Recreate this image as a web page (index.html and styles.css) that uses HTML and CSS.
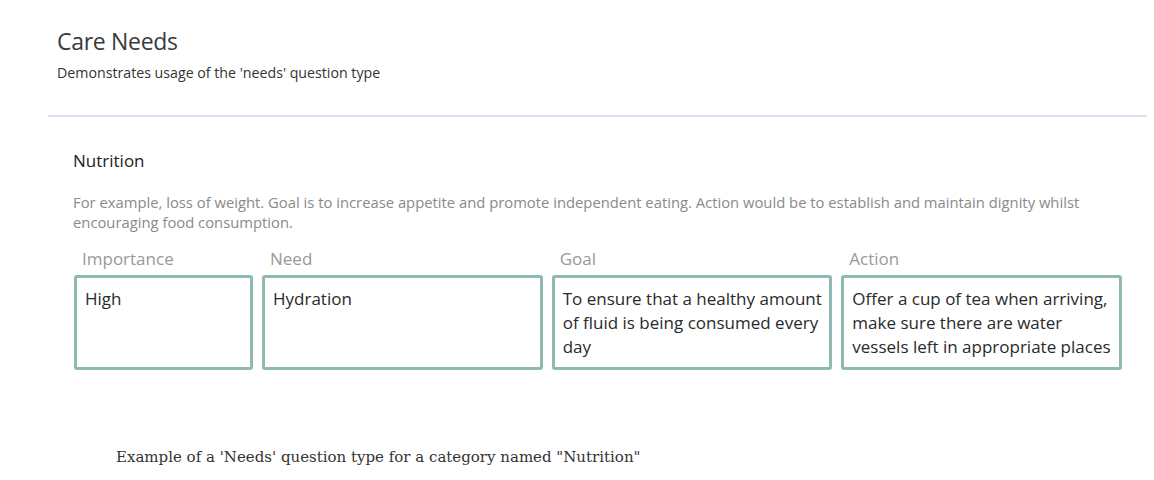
FILE: index.html
```html
<!DOCTYPE html>
<html lang="en">
<head>
  <meta charset="UTF-8">
  <meta name="viewport" content="width=device-width, initial-scale=1.0">
  <title>Care Needs</title>
  <link rel="stylesheet" href="styles.css">
</head>
<body>
  <div class="form">
    <div class="form-header">
      <h1 class="title">Care Needs</h1>
      <p class="subtitle">Demonstrates usage of the 'needs' question type</p>
    </div>

    <div class="question">
      <h2 class="question-title">Nutrition</h2>
      <p class="question-help">For example, loss of weight. Goal is to increase appetite and promote independent eating. Action would be to establish and maintain dignity whilst encouraging food consumption.</p>

      <div class="needs">
        <div class="need-col">
          <label class="need-label">Importance</label>
          <div class="need-box">High</div>
        </div>
        <div class="need-col">
          <label class="need-label">Need</label>
          <div class="need-box">Hydration</div>
        </div>
        <div class="need-col">
          <label class="need-label">Goal</label>
          <div class="need-box">To ensure that a healthy amount of fluid is being consumed every day</div>
        </div>
        <div class="need-col">
          <label class="need-label">Action</label>
          <div class="need-box">Offer a cup of tea when arriving, make sure there are water vessels left in appropriate places</div>
        </div>
      </div>
    </div>
  </div>

  <p class="caption">Example of a 'Needs' question type for a category named "Nutrition"</p>
</body>
</html>
```

FILE: styles.css
```css
body {
  margin: 0;
  background: #fff;
  font-family: "Open Sans", sans-serif;
  color: #333;
}

.form {
  margin: 0 7px 0 48px;
}

.form-header {
  padding: 25px 0 32px 9px;
  border-bottom: 2px solid #e7d9ef;
}

.title {
  margin: 0;
  font-size: 23px;
  font-weight: 400;
  letter-spacing: -0.3px;
  line-height: 33px;
  color: #3a3a3a;
}

.subtitle {
  margin: 5px 0 0;
  font-size: 14.2px;
  line-height: 20px;
  color: #333;
}

.question {
  padding: 32px 0 0 25px;
}

.question-title {
  margin: 0;
  font-size: 17px;
  font-weight: 400;
  line-height: 24px;
  color: #222;
}

.question-help {
  margin: 19px 0 0;
  font-size: 14.8px;
  line-height: 20px;
  color: #8a8a8a;
  max-width: 1030px;
}

.needs {
  display: grid;
  grid-template-columns: 179px 1fr 1fr 1fr;
  gap: 9px;
  width: 1048px;
  margin: 15px 0 0 1px;
}

.need-label {
  display: block;
  padding-left: 8px;
  font-size: 17px;
  line-height: 24px;
  color: #999;
  margin-bottom: 4px;
}

.need-box {
  height: 95px;
  box-sizing: border-box;
  border: 3px solid #8fbab4;
  border-radius: 3px;
  padding: 9px 6px 8px 8px;
  font-size: 17px;
  line-height: 24px;
  color: #2a2a2a;
}

.caption {
  margin: 78px 0 0 116px;
  font-family: "DejaVu Serif", serif;
  font-size: 15px;
  color: #333;
}
```
